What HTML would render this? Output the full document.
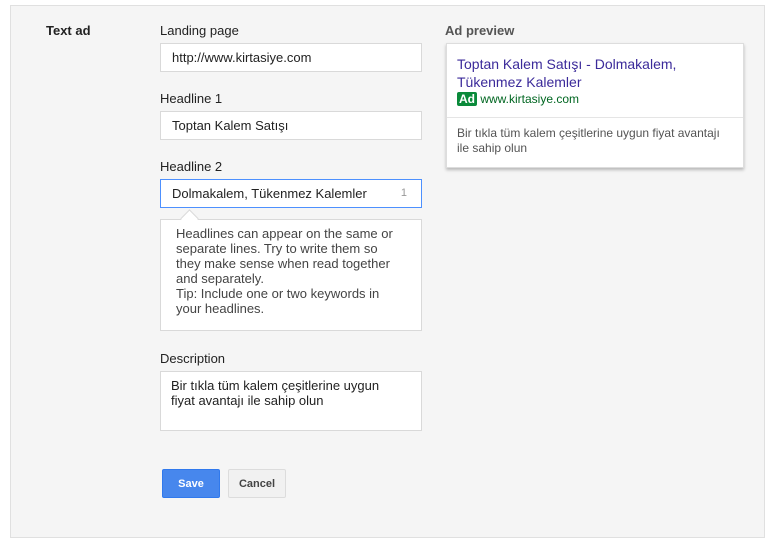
<!DOCTYPE html>
<html><head><style>
body{margin:0;width:779px;height:541px;background:#fff;font-family:"Liberation Sans",Arial,sans-serif;position:relative;overflow:hidden;color:#222}
.panel{position:absolute;left:10px;top:5px;width:753px;height:531px;background:#f5f5f5;border:1px solid #e0e0e0}
.a{position:absolute}
.lbl{font-size:13px;color:#222}
.inp{position:absolute;left:160px;background:#fff;border:1px solid #d9d9d9;font-size:13px;line-height:27px;padding-left:11px;box-sizing:border-box;width:262px;height:29px}
</style></head><body>
<div class="panel"></div>
<div class="a" style="left:46px;top:23px;font-size:13px;font-weight:bold">Text ad</div>
<div class="a lbl" style="left:160px;top:23px">Landing page</div>
<div class="inp" style="top:43px">http://www.kirtasiye.com</div>
<div class="a lbl" style="left:160px;top:91px">Headline 1</div>
<div class="inp" style="top:111px">Toptan Kalem Satışı</div>
<div class="a lbl" style="left:160px;top:159px">Headline 2</div>
<div class="inp" style="top:179px;border-color:#4d90fe">Dolmakalem, Tükenmez Kalemler<span style="position:absolute;right:14px;font-size:11px;color:#999">1</span></div>
<div class="a" style="left:160px;top:219px;width:262px;height:112px;box-sizing:border-box;background:#fff;border:1px solid #d9d9d9;padding:6px 26px 0 15px;font-size:13px;line-height:15px;color:#444">Headlines can appear on the same or separate lines. Try to write them so they make sense when read together and separately.<br>Tip: Include one or two keywords in your headlines.</div>
<div class="a" style="left:183px;top:212px;width:12px;height:12px;background:#fff;border-left:1px solid #d9d9d9;border-top:1px solid #d9d9d9;transform:rotate(45deg)"></div>
<div class="a lbl" style="left:160px;top:351px">Description</div>
<div class="a" style="left:160px;top:371px;width:262px;height:60px;box-sizing:border-box;background:#fff;border:1px solid #d9d9d9;padding:6px 30px 5px 10px;font-size:13px;line-height:15px">Bir tıkla tüm kalem çeşitlerine uygun fiyat avantajı ile sahip olun</div>
<div class="a" style="left:162px;top:469px;width:58px;height:29px;background:#4787ed;border:1px solid #3079ed;box-sizing:border-box;border-radius:2px;color:#fff;font-size:11px;font-weight:bold;text-align:center;line-height:28px">Save</div>
<div class="a" style="left:228px;top:469px;width:58px;height:29px;background:#f1f1f1;border:1px solid #dcdcdc;box-sizing:border-box;border-radius:2px;color:#444;font-size:11px;font-weight:bold;text-align:center;line-height:28px">Cancel</div>
<div class="a" style="left:445px;top:23px;font-size:13px;font-weight:bold;color:#555">Ad preview</div>
<div class="a" style="left:446px;top:43px;width:298px;height:125px;background:#fff;border:1px solid #ddd;box-sizing:border-box;box-shadow:0 2px 3px rgba(0,0,0,.25)">
<div style="padding:11px 10px 0 10px;font-size:14px;line-height:18px;color:#3b2a9a">Toptan Kalem Satışı - Dolmakalem, Tükenmez Kalemler</div>
<div style="padding:1px 10px 0;font-size:12px;color:#006621;line-height:15px"><span style="background:#0a8a3a;color:#fff;padding:0 2px;border-radius:2px;font-weight:bold">Ad</span> www.kirtasiye.com</div>
<div style="border-top:1px solid #e5e5e5;margin-top:10px;padding:8px 10px 0;font-size:12px;line-height:15px;color:#545454">Bir tıkla tüm kalem çeşitlerine uygun fiyat avantajı ile sahip olun</div>
</div>
</body></html>
